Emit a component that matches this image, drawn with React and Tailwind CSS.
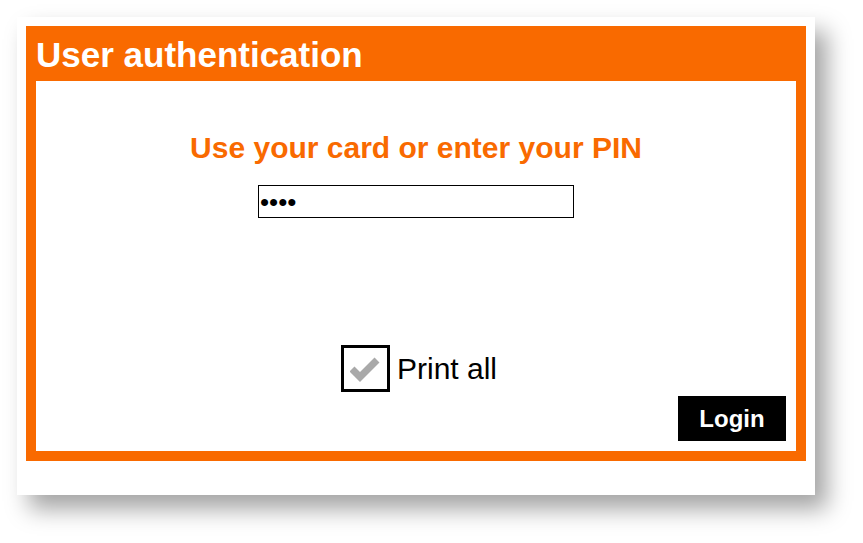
import React from "react";

const CheckIcon = () => (
  <svg width="30" height="26" viewBox="0 0 30 26" className="block">
    <polyline
      points="2,13 10,21 27,4"
      fill="none"
      stroke="#a9a9a9"
      strokeWidth="7"
      strokeLinejoin="miter"
      strokeLinecap="butt"
    />
  </svg>
);

const App = () => {
  return (
    <div
      className="min-h-[543px] w-[863px] bg-white pl-[17px] pt-[17px]"
      style={{ fontFamily: '"Liberation Sans", Arial, sans-serif' }}
    >
      <div className="w-[798px] h-[478px] bg-white px-[9px] pt-[9px] shadow-[12px_14px_22px_rgba(0,0,0,0.36)]">
        <div className="w-[780px] h-[435px] bg-[#f96a00] flex flex-col">
          {/* HEADER */}
          <div className="h-[55px] flex items-center pl-[10px] pt-[2px]">
            <h1 className="text-white font-bold text-[35px] leading-none">
              User authentication
            </h1>
          </div>

          {/* BODY */}
          <div className="mx-[10px] mb-[10px] flex-1 bg-white flex flex-col items-center">
            <h2 className="mt-[51px] text-[#f96a00] font-bold text-[30px] leading-[32px]">
              Use your card or enter your PIN
            </h2>

            <div className="mt-[21px] w-[316px] h-[33px] border border-black flex items-center pl-[1px]">
              <span className="text-black text-[26px] leading-none">
                ••••
              </span>
            </div>

            <div className="mt-[127px] flex items-center gap-[7px] pl-[6px]">
              <div className="w-[49px] h-[47px] border-[3px] border-black flex items-center justify-center">
                <CheckIcon />
              </div>
              <span className="text-black text-[30px] leading-none">Print all</span>
            </div>

            <div className="w-full flex justify-end pr-[10px] mt-[4px]">
              <button className="w-[108px] h-[45px] bg-black text-white font-bold text-[24px] leading-none">
                Login
              </button>
            </div>
          </div>
        </div>
      </div>
    </div>
  );
};

export default App;
